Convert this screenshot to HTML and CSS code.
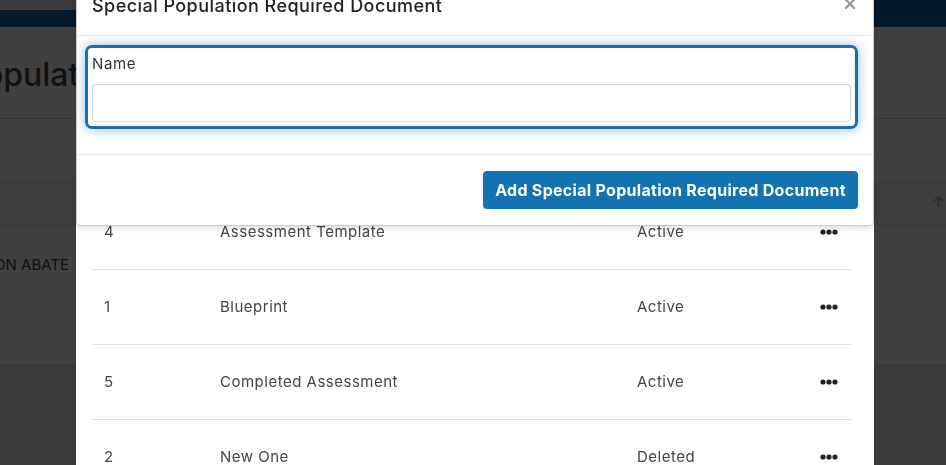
FILE: index.html
```html
<!DOCTYPE html>
<html lang="en">
<head>
    <meta charset="UTF-8">
    <meta name="viewport" content="width=device-width, initial-scale=1.0">
    <title>Special Population Required Documents</title>
    <link rel="stylesheet" href="styles.css">
</head>
<body>
    <div class="page">
        <header class="topbar"><div class="topbar-left"></div></header>
        <div class="page-head">
            <h1>Special Population Required Documents</h1>
        </div>
        <div class="toolbar"></div>
        <div class="grid-head"><span class="sort">&#8593;&#8595;</span></div>
        <div class="grid-row"><span class="grid-name">JASON ABATE</span></div>
        <div class="grid-foot"></div>
    </div>

    <div class="backdrop"></div>

    <!-- list of documents (opened first) -->
    <div class="modal list-modal">
        <table class="doc-table">
            <thead>
                <tr><th>#</th><th>Name</th><th>Status</th><th></th></tr>
            </thead>
            <tbody>
                <tr><td class="col-id">4</td><td>Assessment Template</td><td>Active</td><td class="col-act"><span class="dots"><svg width="18" height="6" viewBox="0 0 18 6"><circle cx="3" cy="3" r="2.6"/><circle cx="9" cy="3" r="2.6"/><circle cx="15" cy="3" r="2.6"/></svg></span></td></tr>
                <tr><td class="col-id">1</td><td>Blueprint</td><td>Active</td><td class="col-act"><span class="dots"><svg width="18" height="6" viewBox="0 0 18 6"><circle cx="3" cy="3" r="2.6"/><circle cx="9" cy="3" r="2.6"/><circle cx="15" cy="3" r="2.6"/></svg></span></td></tr>
                <tr><td class="col-id">5</td><td>Completed Assessment</td><td>Active</td><td class="col-act"><span class="dots"><svg width="18" height="6" viewBox="0 0 18 6"><circle cx="3" cy="3" r="2.6"/><circle cx="9" cy="3" r="2.6"/><circle cx="15" cy="3" r="2.6"/></svg></span></td></tr>
                <tr><td class="col-id">2</td><td>New One</td><td>Deleted</td><td class="col-act"><span class="dots"><svg width="18" height="6" viewBox="0 0 18 6"><circle cx="3" cy="3" r="2.6"/><circle cx="9" cy="3" r="2.6"/><circle cx="15" cy="3" r="2.6"/></svg></span></td></tr>
            </tbody>
        </table>
    </div>

    <!-- add form stacked on top -->
    <div class="modal add-modal">
        <div class="modal-header">
            <h5 class="modal-title">Special Population Required Document</h5>
            <button class="close" type="button">&times;</button>
        </div>
        <div class="modal-body">
            <div class="form-group focused">
                <label for="docName">Name</label>
                <input type="text" id="docName">
            </div>
        </div>
        <div class="modal-footer">
            <button class="btn-primary" type="button">Add Special Population Required Document</button>
        </div>
    </div>
</body>
</html>
```

FILE: styles.css
```css
body {
    margin: 0;
    font-family: "Inter", "Noto Sans", sans-serif;
    background-color: #fff;
    overflow: hidden;
}

/* page behind the backdrop */
.page {
    width: 100%;
}
.topbar {
    height: 27px;
    background-color: #0c68b0;
}
.topbar-left {
    width: 76px;
    height: 10px;
    background-color: #ececec;
}
.page-head {
    height: 91px;
    display: flex;
    align-items: center;
    border-bottom: 1px solid #d8d8d8;
    overflow: hidden;
}
.page-head h1 {
    margin: 4px 0 0 -157px;
    white-space: nowrap;
    font-size: 32px;
    font-weight: 500;
    color: #444;
}
.toolbar {
    height: 61px;
    border-bottom: 1px solid #ededed;
}
.grid-head {
    height: 44px;
    background-color: #f4f4f4;
    border-bottom: 1px solid #e6e6e6;
    display: flex;
    align-items: center;
    justify-content: flex-end;
}
.sort {
    font-size: 15px;
    color: #999;
    margin: 0 -11px 4px 0;
}
.grid-row {
    height: 138px;
    border-bottom: 1px solid #dadada;
    display: flex;
}
.grid-name {
    width: 69px;
    height: 76px;
    display: flex;
    align-items: center;
    justify-content: flex-end;
    overflow: hidden;
    white-space: nowrap;
    font-size: 15px;
    color: #444;
}
.grid-foot {
    height: 120px;
    background-color: #e4e8f0;
}

.backdrop {
    position: fixed;
    inset: 0;
    background-color: rgba(0, 0, 0, 0.75);
}

/* modals */
.modal {
    position: fixed;
    left: 76px;
    width: 798px;
    background-color: #fff;
    box-sizing: border-box;
}
.list-modal {
    top: 0;
    bottom: 0;
    padding: 120px 23px 0 16px;
}
.doc-table {
    width: 100%;
    border-collapse: collapse;
    font-size: 15px;
    letter-spacing: 0.5px;
    color: #444;
}
.doc-table th,
.doc-table td {
    height: 73px;
    padding: 0 12px 1px 12px;
    text-align: left;
    font-weight: 400;
    border-bottom: 1px solid #dee2e6;
}
.doc-table .col-id {
    width: 92px;
}
.doc-table td:nth-child(3) {
    width: 161px;
}
.doc-table .col-act {
    width: 28px;
    padding: 0 13px 0 0;
    text-align: right;
}
.dots svg {
    display: block;
    margin-left: auto;
    fill: #222;
}

.add-modal {
    top: -25px;
    border: 1px solid rgba(0, 0, 0, 0.2);
    border-radius: 5px;
    box-shadow: 0 2px 6px rgba(0, 0, 0, 0.15);
}
.modal-header {
    display: flex;
    align-items: center;
    justify-content: space-between;
    padding: 16px 16px 16px 15px;
    border-bottom: 1px solid #e3e7ec;
}
.modal-title {
    margin: 0;
    font-size: 18px;
    font-weight: 500;
    line-height: 27px;
    letter-spacing: 0.45px;
    color: #222;
}
.close {
    border: none;
    background: none;
    padding: 0 0 4px 0;
    margin-right: -1px;
    font-size: 19px;
    font-weight: 700;
    line-height: 1;
    color: #999;
    font-family: "DejaVu Sans", sans-serif;
}
.modal-body {
    padding: 9px 15px 25px 8px;
    border-bottom: 1px solid #e9ecef;
}
.form-group {
    padding: 4px;
    border: 3px solid #1670b0;
    border-radius: 7px;
}
.form-group.focused {
    box-shadow: 0 0 12px rgba(22, 112, 176, 0.45);
}
.form-group label {
    display: block;
    font-size: 15px;
    line-height: 22px;
    letter-spacing: 0.6px;
    color: #333;
    margin: 1px 0 9px 0;
}
.form-group input {
    display: block;
    width: 100%;
    height: 38px;
    box-sizing: border-box;
    border: 1px solid #cfd4db;
    border-radius: 4px;
    outline: none;
    padding: 0 12px;
}
.modal-footer {
    display: flex;
    justify-content: flex-end;
    padding: 16px 15px;
}
.btn-primary {
    height: 38px;
    width: 375px;
    border: none;
    border-radius: 4px;
    background-color: #1373b0;
    color: #fff;
    font-family: inherit;
    font-size: 16px;
    font-weight: 700;
    letter-spacing: 0.3px;
}
```
